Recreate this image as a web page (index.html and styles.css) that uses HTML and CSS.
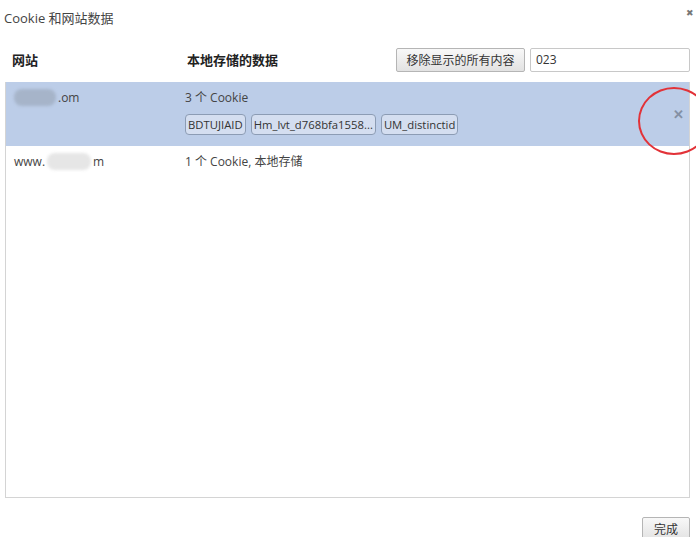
FILE: index.html
```html
<!DOCTYPE html>
<html lang="zh-CN">
<head>
    <meta charset="UTF-8">
    <title>Cookie 和网站数据</title>
    <link rel="stylesheet" href="styles.css">
</head>
<body>
    <div class="dialog">
        <div class="title-bar">
            <span class="title">Cookie 和网站数据</span>
            <span class="close">&#x2716;</span>
        </div>

        <div class="toolbar">
            <span class="col-site head">网站</span>
            <span class="col-data head">本地存储的数据</span>
            <button class="btn clear">移除显示的所有内容</button>
            <input class="search" type="text" value="023">
        </div>

        <div class="list">
            <div class="row selected">
                <div class="col-site"><span class="blur b1"></span>.om</div>
                <div class="col-data">
                    <div>3 个 Cookie</div>
                    <div class="chips">
                        <span class="chip">BDTUJIAID</span>
                        <span class="chip">Hm_lvt_d768bfa1558...</span>
                        <span class="chip">UM_distinctid</span>
                    </div>
                </div>
                <span class="remove">&#x2715;</span>
                <span class="mark"></span>
            </div>
            <div class="row">
                <div class="col-site">www.<span class="blur b2"></span>m</div>
                <div class="col-data">1 个 Cookie, 本地存储</div>
            </div>
        </div>

        <div class="footer">
            <button class="btn done">完成</button>
        </div>
    </div>
</body>
</html>
```

FILE: styles.css
```css
body {
    margin: 0;
    background: #fff;
    font-family: "Open Sans", "Noto Sans CJK SC", sans-serif;
    font-size: 12px;
    color: #333;
    overflow: hidden;
}
.dialog {
    width: 696px;
    height: 537px;
}
.title-bar {
    display: flex;
    justify-content: space-between;
    height: 37px;
    padding: 8px 0 0 4px;
    box-sizing: border-box;
}
.title {
    font-size: 13px;
    color: #444;
}
.close {
    font-size: 9px;
    color: #777;
    margin: -2px 2px 0 0;
}
.toolbar {
    display: flex;
    align-items: center;
    height: 45px;
    padding-left: 12px;
}
.head {
    font-weight: bold;
    font-size: 13px;
    color: #222;
}
.col-site {
    width: 175px;
    flex-shrink: 0;
}
.toolbar .col-data {
    width: 209px;
    flex-shrink: 0;
}
.btn {
    font-family: inherit;
    font-size: 12px;
    color: #333;
    height: 24px;
    padding: 0 8px;
    border: 1px solid #b5b5b5;
    border-radius: 2px;
    background: linear-gradient(#f8f8f8, #e2e2e2);
}
.clear {
    width: 129px;
    flex-shrink: 0;
}
.search {
    margin-left: 5px;
    width: 160px;
    height: 24px;
    box-sizing: border-box;
    border: 1px solid #c8c8c8;
    border-radius: 2px;
    padding: 0 5px;
    font-family: inherit;
    font-size: 12px;
    color: #333;
}
.list {
    margin: 0 6px 0 5px;
    height: 415px;
    border: 1px solid #d4d4d4;
    border-top: none;
    position: relative;
}
.row {
    display: flex;
    position: relative;
    padding: 8px 0 0 8px;
    height: 29px;
    line-height: 15px;
    color: #444;
}
.row.selected {
    background: #bccde8;
    height: 56px;
}
.row .col-site {
    width: 170px;
    display: flex;
}
.row .col-data {
    padding-left: 1px;
}
.blur {
    display: inline-block;
    height: 17px;
    border-radius: 8px;
    filter: blur(1.5px);
}
.b1 {
    width: 42px;
    margin: -1px 2px 0 0;
    background: #a6b4c9;
}
.b2 {
    width: 44px;
    margin: -1px 2px 0 2px;
    background: #e6e6e6;
}
.chips {
    display: flex;
    gap: 5px;
    margin-top: 9px;
}
.chip {
    border: 1px solid #8c9cb4;
    border-radius: 4px;
    background: #d4def0;
    padding: 2px 2px;
    font-size: 11.3px;
    color: #333;
}
.remove {
    position: absolute;
    right: 5px;
    top: 25px;
    font-size: 13px;
    font-weight: bold;
    color: #8490a4;
}
.mark {
    position: absolute;
    left: 632px;
    top: 5px;
    width: 68px;
    height: 64px;
    border: 2.5px solid #e23238;
    border-radius: 50%;
}
.footer {
    display: flex;
    justify-content: flex-end;
    padding: 19px 6px 0 0;
}
.done {
    height: 24px;
    width: 48px;
    padding: 0;
}
```
